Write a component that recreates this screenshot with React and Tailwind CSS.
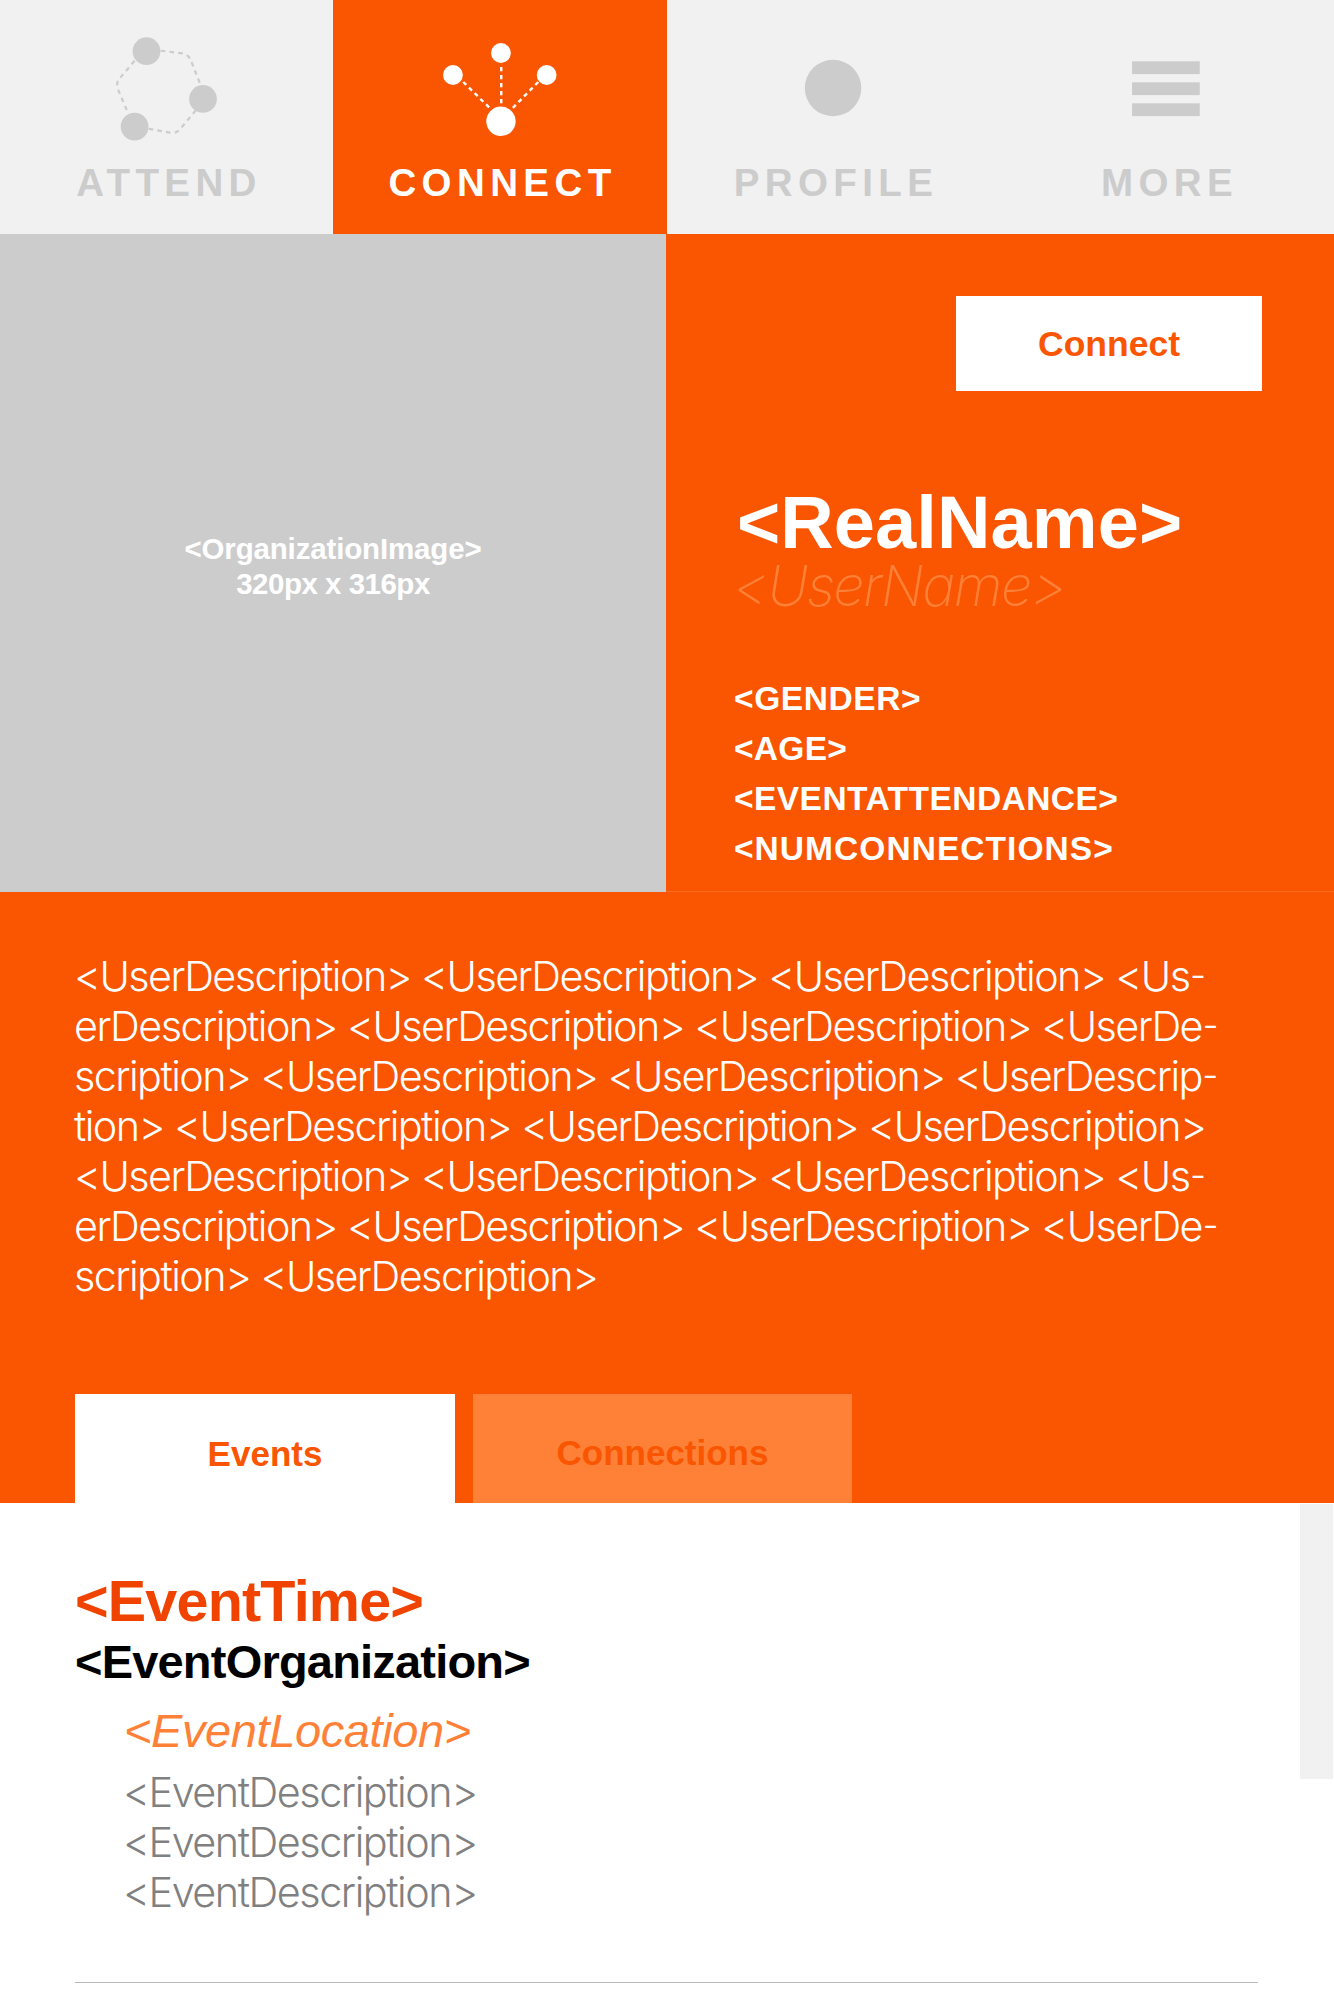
const light = "font-['Inter','Liberation_Sans',sans-serif]";

function NavItem({ label, active, children }) {
  return (
    <a
      className={
        "flex h-[234px] flex-col items-center " +
        (active ? "bg-[#fa5500] text-white" : "bg-[#f1f1f1] text-[#cccccc]")
      }
    >
      {children}
      <span className="pl-[5px] text-[38.5px] leading-[50px] font-bold tracking-[5.4px]">{label}</span>
    </a>
  );
}

function AttendIcon() {
  return (
    <svg className="h-[158px] w-full shrink-0" viewBox="0 0 333.5 158" fill="currentColor">
      <g fill="none" stroke="currentColor" strokeWidth="2.2" strokeDasharray="4.6 4.2">
        <path d="M161 50.7 L183 53.3 Q189 55 191 60 L200.5 84" />
        <path d="M134.8 60.7 L118.5 80 Q116.5 83 118 89 L127.8 112" />
        <path d="M148.9 128.8 L170 132.7 Q177 134 181 128.5 L196 110.5" />
      </g>
      <circle cx="146.7" cy="51.2" r="13.9" />
      <circle cx="203.3" cy="99" r="13.9" />
      <circle cx="134.8" cy="126.7" r="13.9" />
    </svg>
  );
}

function ConnectIcon() {
  return (
    <svg className="h-[158px] w-full shrink-0" viewBox="0 0 333.5 158" fill="currentColor">
      <g stroke="currentColor" strokeWidth="2.4" strokeDasharray="4.2 3.8">
        <path d="M168 67 V107" />
        <path d="M130 82 L157 108.5" />
        <path d="M205 82 L179 108.5" />
      </g>
      <circle cx="167.7" cy="53" r="9.9" />
      <circle cx="119.7" cy="75" r="9.9" />
      <circle cx="213.4" cy="75" r="9.9" />
      <circle cx="167.7" cy="121.3" r="14.7" />
    </svg>
  );
}

function ProfileIcon() {
  return (
    <svg className="h-[158px] w-full shrink-0" viewBox="0 0 333.5 158" fill="currentColor">
      <circle cx="166.3" cy="88" r="28.3" />
    </svg>
  );
}

function MoreIcon() {
  return (
    <svg className="h-[158px] w-full shrink-0" viewBox="0 0 333.5 158" fill="currentColor">
      <rect x="131.8" y="61.3" width="67.7" height="12.8" />
      <rect x="131.8" y="82.3" width="67.7" height="12.8" />
      <rect x="131.8" y="103.3" width="67.7" height="12.8" />
    </svg>
  );
}

const descriptionLines = [
  { text: "<UserDescription> <UserDescription> <UserDescription> <Us", hyphen: true },
  { text: "erDescription> <UserDescription> <UserDescription> <UserDe", hyphen: true },
  { text: "scription> <UserDescription> <UserDescription> <UserDescrip", hyphen: true },
  { text: "tion> <UserDescription> <UserDescription> <UserDescription>" },
  { text: "<UserDescription> <UserDescription> <UserDescription> <Us", hyphen: true },
  { text: "erDescription> <UserDescription> <UserDescription> <UserDe", hyphen: true },
  { text: "scription> <UserDescription>" },
];

export default function App() {
  return (
    <div className="h-[2001px] w-[1334px] overflow-hidden bg-white font-['Liberation_Sans',Arial,sans-serif] whitespace-nowrap">
      <nav className="grid grid-cols-[333px_334px_333px_334px]">
        <NavItem label="ATTEND"><AttendIcon /></NavItem>
        <NavItem label="CONNECT" active><ConnectIcon /></NavItem>
        <NavItem label="PROFILE"><ProfileIcon /></NavItem>
        <NavItem label="MORE"><MoreIcon /></NavItem>
      </nav>

      <section className="grid h-[658px] grid-cols-[666px_668px]">
        <div className="flex flex-col items-center bg-[#cccccc] pt-[298px] text-[29.5px] leading-[34.7px] font-bold tracking-[-0.15px] text-white">
          <span>{"<OrganizationImage>"}</span>
          <span className="tracking-[-0.5px]">320px x 316px</span>
        </div>
        <div className="flex flex-col border-b border-[#fb6a20] bg-[#fa5500] pt-[62px] pl-[71px] text-white">
          <button className="mr-[72px] h-[95px] w-[306px] self-end bg-white text-[35.5px] leading-[50px] font-bold text-[#fa5500]">
            Connect
          </button>
          <h1 className="mt-[98px] text-[74px] leading-[68px] font-bold tracking-[0.1px]">{"<RealName>"}</h1>
          <h2 className={light + " mt-[2px] -ml-[4px] text-[56px] leading-[54px] font-extralight tracking-[-1.6px] text-[#ff8137] italic"}>
            {"<UserName>"}
          </h2>
          <ul className="mt-[61px] -ml-[3px] text-[33.5px] leading-[50px] font-bold">
            <li className="tracking-[0.6px]">{"<GENDER>"}</li>
            <li className="tracking-[0.3px]">{"<AGE>"}</li>
            <li className="tracking-[0.45px]">{"<EVENTATTENDANCE>"}</li>
            <li className="tracking-[1.05px]">{"<NUMCONNECTIONS>"}</li>
          </ul>
        </div>
      </section>

      <section className="flex h-[611px] flex-col justify-between bg-[#fa5500] px-[75px] pt-[59px]">
        <p className={light + " -ml-px text-[41.3px] leading-[50px] font-light tracking-[-1.55px] text-white"}>
          {descriptionLines.map((line, i) => (
            <span key={i} className="block h-[50px]">
              {line.text}
              {line.hyphen && <span className="pl-[2px] font-['Roboto'] text-[46px] leading-[40px] font-light">-</span>}
            </span>
          ))}
        </p>
        <div className="flex gap-[18px] text-[35px] font-bold text-[#fa5500]">
          <button className="h-[109px] w-[380px] bg-white pt-[11px] leading-[50px]">Events</button>
          <button className="h-[109px] w-[379px] bg-[#ff8137] pt-[9px] leading-[50px]">Connections</button>
        </div>
      </section>

      <section className="flex justify-between">
        <article className="flex w-[1258px] flex-col pt-[68px] pl-[75px]">
          <h3 className="text-[57.5px] leading-[60px] font-bold tracking-[-0.8px] text-[#f04300]">{"<EventTime>"}</h3>
          <h4 className="mt-[3px] text-[47px] leading-[56px] font-bold tracking-[-0.8px] text-black">{"<EventOrganization>"}</h4>
          <p className="mt-[13px] pl-[49px] text-[47px] leading-[56px] tracking-[-0.4px] text-[#ff8137] italic">{"<EventLocation>"}</p>
          <div className={light + " mt-[8px] pl-[48px] text-[41.3px] leading-[50px] font-light tracking-[-1.45px] text-[#808080]"}>
            <p>{"<EventDescription>"}</p>
            <p>{"<EventDescription>"}</p>
            <p>{"<EventDescription>"}</p>
          </div>
          <hr className="mt-[65px] border-t border-[#b8b8b8]" />
        </article>
        <div className="mt-px mr-px h-[275px] w-[33px] bg-[#f1f1f1]" />
      </section>
    </div>
  );
}
